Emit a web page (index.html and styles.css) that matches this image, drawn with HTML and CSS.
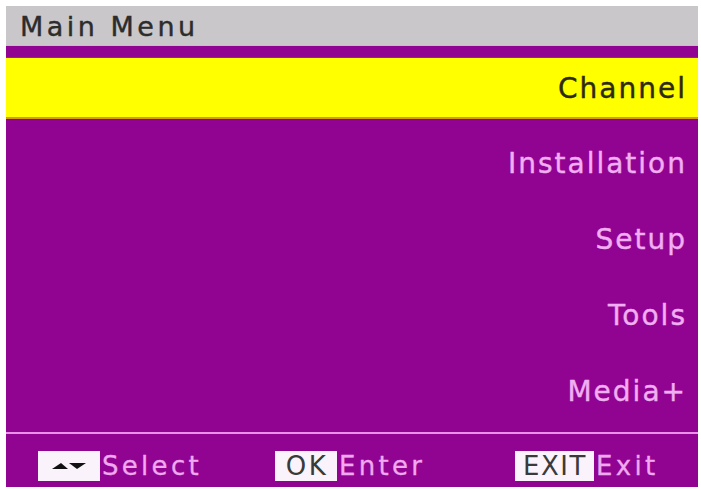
FILE: index.html
```html
<!DOCTYPE html>
<html lang="en">
<head>
<meta charset="utf-8">
<title>Main Menu</title>
<link rel="stylesheet" href="styles.css">
</head>
<body>
<div class="panel">
  <div class="header">Main Menu</div>
  <div class="menu">
    <div class="item active">Channel</div>
    <div class="item">Installation</div>
    <div class="item">Setup</div>
    <div class="item">Tools</div>
    <div class="item">Media+</div>
  </div>
  <div class="footer">
    <div class="hint">
      <span class="key key-arrows">
        <svg width="34" height="8" viewBox="0 0 34 8"><polygon points="0,7 9,1 16,7" fill="#111"/><polygon points="17,1 34,1 25,7" fill="#111"/></svg>
      </span><span class="label">Select</span>
    </div>
    <div class="hint">
      <span class="key key-ok">OK</span><span class="label">Enter</span>
    </div>
    <div class="hint">
      <span class="key key-exit">EXIT</span><span class="label">Exit</span>
    </div>
  </div>
</div>
</body>
</html>
```

FILE: styles.css
```css
html, body {
  margin: 0;
  padding: 0;
  background: #ffffff;
}
body {
  padding: 6px 0 0 6px;
  font-family: "DejaVu Sans", "Liberation Sans", sans-serif;
}
.panel {
  width: 692px;
  height: 481px;
  background: #910491;
  display: flex;
  flex-direction: column;
}
.header {
  box-sizing: border-box;
  height: 40px;
  padding: 3px 0 0 14px;
  line-height: 36px;
  font-size: 27px;
  letter-spacing: 3.5px;
  color: #2c2c2c;
  background: #c9c7c9;
  border-bottom: 1px solid #e7a6e7;
  -webkit-text-stroke: 0.4px currentColor;
}
.menu {
  display: flex;
  flex-direction: column;
  gap: 14px;
  padding: 11px 0 9px;
  border-bottom: 2px solid #ea92ea;
}
.item {
  box-sizing: border-box;
  height: 62px;
  line-height: 60px;
  padding: 1px 11px 0 0;
  text-align: right;
  font-size: 28px;
  letter-spacing: 2px;
  color: #f2aef2;
  -webkit-text-stroke: 0.4px currentColor;
}
.item.active {
  background: #ffff00;
  color: #2e2a10;
  border-top: 1px solid #8a3a30;
  border-bottom: 2px solid #d49a20;
  line-height: 58px;
  padding-top: 2px;
}
.footer {
  flex: 1;
  display: grid;
  grid-template-columns: 237px 240px 1fr;
  padding: 17px 0 0 32px;
  align-items: start;
}
.hint {
  display: flex;
  align-items: center;
  height: 30px;
}
.key {
  box-sizing: border-box;
  height: 30px;
  line-height: 30px;
  background: #fbf3fb;
  color: #3a3a3a;
  font-size: 26px;
  text-align: center;
  display: flex;
  align-items: center;
  justify-content: center;
}
.key-arrows {
  width: 62px;
}
.key-ok {
  width: 62px;
  letter-spacing: 2.5px;
  padding-left: 2px;
}
.key-exit {
  width: 79px;
  letter-spacing: 1.5px;
  padding-left: 1px;
}
.label {
  font-size: 26px;
  line-height: 30px;
  letter-spacing: 3.3px;
  color: #f0a8f0;
  padding-left: 2px;
  -webkit-text-stroke: 0.3px currentColor;
}
```
